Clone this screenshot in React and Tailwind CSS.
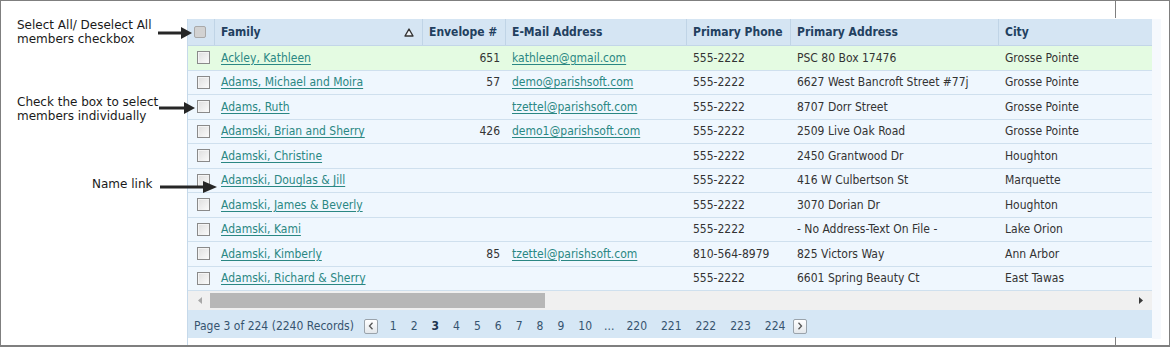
import React from 'react';

const rows = [
    { name: 'Ackley, Kathleen', env: '651', email: 'kathleen@gmail.com', phone: '555-2222', addr: 'PSC 80 Box 17476', city: 'Grosse Pointe', hl: true },
    { name: 'Adams, Michael and Moira', env: '57', email: 'demo@parishsoft.com', phone: '555-2222', addr: '6627 West Bancroft Street #77j', city: 'Grosse Pointe' },
    { name: 'Adams, Ruth', env: '', email: 'tzettel@parishsoft.com', phone: '555-2222', addr: '8707 Dorr Street', city: 'Grosse Pointe' },
    { name: 'Adamski, Brian and Sherry', env: '426', email: 'demo1@parishsoft.com', phone: '555-2222', addr: '2509 Live Oak Road', city: 'Grosse Pointe' },
    { name: 'Adamski, Christine', env: '', email: '', phone: '555-2222', addr: '2450 Grantwood Dr', city: 'Houghton' },
    { name: 'Adamski, Douglas & Jill', env: '', email: '', phone: '555-2222', addr: '416 W Culbertson St', city: 'Marquette' },
    { name: 'Adamski, James & Beverly', env: '', email: '', phone: '555-2222', addr: '3070 Dorian Dr', city: 'Houghton' },
    { name: 'Adamski, Kami', env: '', email: '', phone: '555-2222', addr: '- No Address-Text On File -', city: 'Lake Orion' },
    { name: 'Adamski, Kimberly', env: '85', email: 'tzettel@parishsoft.com', phone: '810-564-8979', addr: '825 Victors Way', city: 'Ann Arbor' },
    { name: 'Adamski, Richard & Sherry', env: '', email: '', phone: '555-2222', addr: '6601 Spring Beauty Ct', city: 'East Tawas' },
];

const pages = ['1', '2', '3', '4', '5', '6', '7', '8', '9', '10', '...', '220', '221', '222', '223', '224'];

const cols = 'grid grid-cols-[27px_208px_83px_181px_104px_208px_154px]';

function Checkbox() {
    return (
        <div className="w-[13px] h-[13px] border border-[#8a8a8a] bg-gradient-to-br from-[#dedede] to-[#fbfbfb] shadow-[inset_1px_1px_0_#f4f4f4]" />
    );
}

function Arrow({ width, head = 12 }) {
    return (
        <svg width={width} height="14" viewBox={`0 0 ${width} 14`}>
            <line x1="0" y1="7" x2={width - head + 1} y2="7" stroke="#262626" strokeWidth="3" />
            <polygon points={`${width - head},1 ${width},7 ${width - head},13`} fill="#262626" />
        </svg>
    );
}

function PagerButton({ dir }) {
    return (
        <div className="w-[14px] h-[15px] rounded-[2px] border border-[#9aa3ab] bg-gradient-to-b from-[#ffffff] to-[#e4e8ec] flex items-center justify-center">
            <svg width="6" height="8" viewBox="0 0 6 8">
                <path d={dir === 'prev' ? 'M4.5 0.8 L1.5 4 L4.5 7.2' : 'M1.5 0.8 L4.5 4 L1.5 7.2'} fill="none" stroke="#555" strokeWidth="1.3" />
            </svg>
        </div>
    );
}

export default function App() {
    const font = "font-['DejaVu_Sans_Condensed','DejaVu_Sans',sans-serif]";
    return (
        <div className={`relative w-[1170px] h-[347px] bg-white border border-b-2 border-[#7f7f7f] flex ${font}`}>
            {/* frame ticks */}
            <div className="absolute left-[1114px] top-0 w-px h-[17px] bg-[#7f7f7f]" />
            <div className="absolute left-[1114px] bottom-0 w-px h-[8px] bg-[#7f7f7f]" />

            {/* callouts */}
            <div className="w-[186px] shrink-0 relative font-['DejaVu_Sans',sans-serif] text-[12px] leading-[14px] text-[#1a1a1a]">
                <div className="absolute left-[16px] top-[17px] whitespace-nowrap">Select All/ Deselect All<br />members checkbox</div>
                <div className="absolute left-[157px] top-[25px]"><Arrow width={34} head={11} /></div>
                <div className="absolute left-[16px] top-[94px] whitespace-nowrap">Check the box to select<br />members individually</div>
                <div className="absolute left-[158px] top-[100px]"><Arrow width={36} head={11} /></div>
                <div className="absolute left-[91px] top-[176px]">Name link</div>
                <div className="absolute left-[159px] top-[179px] z-10"><Arrow width={57} head={14} /></div>
            </div>

            {/* grid */}
            <div className="pt-[18px] flex shrink-0">
                <div className="w-[965px] flex flex-col border-l border-[#c6d9ea] text-[12px] text-[#333]">
                    <div className={`${cols} h-[27px] bg-[#d5e5f3] border-b border-[#c3d6e8] font-bold text-[#22405f]`}>
                        <div className="flex items-center pl-[6px] border-r border-[#c0d4e6]">
                            <div className="w-[12px] h-[12px] rounded-[2px] border border-[#a9a9a9] bg-[#d2d2d2]" />
                        </div>
                        <div className="flex items-center justify-between pl-[6px] pr-[8px] border-r border-[#c0d4e6]">
                            <span>Family</span>
                            <svg width="10" height="9" viewBox="0 0 10 9">
                                <path d="M5 1 L9 8 L1 8 Z" fill="#eef2f6" stroke="#333" strokeWidth="1.4" strokeLinejoin="round" />
                            </svg>
                        </div>
                        <div className="flex items-center pl-[6px] border-r border-[#c0d4e6]">Envelope #</div>
                        <div className="flex items-center pl-[6px] border-r border-[#c0d4e6]">E-Mail Address</div>
                        <div className="flex items-center pl-[6px] border-r border-[#c0d4e6]">Primary Phone</div>
                        <div className="flex items-center pl-[6px] border-r border-[#c0d4e6]">Primary Address</div>
                        <div className="flex items-center pl-[6px] border-r border-[#c0d4e6]">City</div>
                    </div>

                    {rows.map((r) => (
                        <div key={r.name} className={`${cols} h-[24.5px] border-b border-[#cfe0ee] ${r.hl ? 'bg-[#e4fbe2]' : 'bg-[#eff7fe]'}`}>
                            <div className="flex items-center pl-[9px]"><Checkbox /></div>
                            <div className="flex items-center pl-[6px]">
                                <a className="text-[#2a8783] underline underline-offset-2 whitespace-nowrap">{r.name}</a>
                            </div>
                            <div className="flex items-center justify-end pr-[6px]">{r.env}</div>
                            <div className="flex items-center pl-[6px]">
                                {r.email && <a className="text-[#2a8783] underline underline-offset-2 whitespace-nowrap">{r.email}</a>}
                            </div>
                            <div className="flex items-center pl-[6px] whitespace-nowrap">{r.phone}</div>
                            <div className="flex items-center pl-[6px] whitespace-nowrap">{r.addr}</div>
                            <div className="flex items-center pl-[6px] whitespace-nowrap">{r.city}</div>
                        </div>
                    ))}

                    {/* horizontal scrollbar */}
                    <div className="h-[19px] bg-[#f0f0f0] flex items-center pl-[10px] pr-[9px]">
                        <svg width="4" height="7" viewBox="0 0 4 7"><path d="M4 0 L0 3.5 L4 7 Z" fill="#a8a8a8" /></svg>
                        <div className="ml-[8px] w-[335px] h-[15px] bg-[#b7b7b7]" />
                        <div className="flex-1" />
                        <svg width="4" height="7" viewBox="0 0 4 7"><path d="M0 0 L4 3.5 L0 7 Z" fill="#3a3a3a" /></svg>
                    </div>

                    {/* pager */}
                    <div className="h-[28px] bg-[#d6e7f5] flex items-center pl-[6px] pt-[4px] text-[#36546f]">
                        <span className="whitespace-nowrap">Page 3 of 224 (2240 Records)</span>
                        <div className="ml-[10px]"><PagerButton dir="prev" /></div>
                        <div className="flex items-center ml-[5px]">
                            {pages.map((p) => (
                                <span key={p} className={`${p === '...' ? 'px-[5px]' : 'px-[7px]'} ${p === '3' ? 'font-bold text-[#1e3650]' : ''}`}>{p}</span>
                            ))}
                        </div>
                        <div className="ml-[1px]"><PagerButton dir="next" /></div>
                    </div>
                </div>
                <div className="w-[9px] h-[320px] bg-[#f6f9fd]" />
            </div>
        </div>
    );
}
